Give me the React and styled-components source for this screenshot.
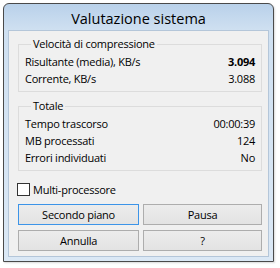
import React from "react";
import styled, { createGlobalStyle } from "styled-components";

const Global = createGlobalStyle`
  html, body { margin: 0; padding: 0; background: #ffffff; }
  body { font-family: "Open Sans", "Noto Sans", sans-serif; font-size: 11px; letter-spacing: -0.25px; color: #000; }
  * { box-sizing: border-box; }
`;

const Page = styled.div`
  padding: 3px 0 0 3px;
  width: 280px;
  height: 268px;
`;

const Window = styled.div`
  width: 271px;
  height: 259px;
  border: 1px solid #4a4a4a;
  border-radius: 6px 6px 0 0;
  background: linear-gradient(#b9d1ea 0px, #cfe0f1 26px, #dbe8f5 100%);
  display: flex;
  flex-direction: column;
  box-shadow: 1px 1px 2px rgba(0,0,0,0.15);
`;

const TitleBar = styled.div`
  height: 26px;
  display: flex;
  align-items: center;
  justify-content: center;
  font-size: 14.5px;
  letter-spacing: 0;
  color: #000;
  padding-top: 2px;
`;

const Frame = styled.div`
  flex: 1;
  padding: 0 4px 4px 4px;
  display: flex;
`;

const Client = styled.div`
  flex: 1;
  background: #f0f0f0;
  border: 1px solid #b4c6d9;
  padding: 6px 6px 0 9px;
  display: flex;
  flex-direction: column;
`;

const Group = styled.fieldset`
  margin: 0 0 ${p => p.$mb}px 0;
  padding: 2px 6px 4px 6px;
  border: 1px solid #dcdcdc;
  border-radius: 0;
  display: flex;
  flex-direction: column;
`;

const Legend = styled.legend`
  padding: 0 2px;
  margin-left: 6px;
  font-size: 11px;
  line-height: 14px;
`;

const Row = styled.div`
  display: flex;
  justify-content: space-between;
  height: 17px;
  line-height: 17px;
`;

const Value = styled.span`
  font-weight: ${p => (p.$bold ? 700 : 400)};
`;

const CheckRow = styled.label`
  display: flex;
  align-items: center;
  gap: 3px;
  height: 15px;
  margin: 0 0 7px -1px;
`;

const Box = styled.span`
  width: 13px;
  height: 13px;
  border: 1px solid #333;
  background: #fff;
`;

const Buttons = styled.div`
  display: grid;
  grid-template-columns: 121px 119px;
  column-gap: 4px;
  row-gap: 5px;
`;

const Button = styled.div`
  height: 21px;
  display: flex;
  align-items: center;
  justify-content: center;
  border: 1px solid ${p => (p.$focus ? "#3c94e8" : "#adadad")};
  background: linear-gradient(#ececec, #e3e3e3);
  font-size: 11px;
`;

export default function App() {
  return (
    <Page>
      <Global />
      <Window>
        <TitleBar>Valutazione sistema</TitleBar>
        <Frame>
          <Client>
            <Group $mb={7}>
              <Legend>Velocità di compressione</Legend>
              <Row><span>Risultante (media), KB/s</span><Value $bold>3.094</Value></Row>
              <Row><span>Corrente, KB/s</span><Value>3.088</Value></Row>
            </Group>
            <Group $mb={11}>
              <Legend>Totale</Legend>
              <Row><span>Tempo trascorso</span><Value>00:00:39</Value></Row>
              <Row><span>MB processati</span><Value>124</Value></Row>
              <Row><span>Errori individuati</span><Value>No</Value></Row>
            </Group>
            <CheckRow><Box />Multi-processore</CheckRow>
            <Buttons>
              <Button $focus>Secondo piano</Button>
              <Button>Pausa</Button>
              <Button>Annulla</Button>
              <Button>?</Button>
            </Buttons>
          </Client>
        </Frame>
      </Window>
    </Page>
  );
}
